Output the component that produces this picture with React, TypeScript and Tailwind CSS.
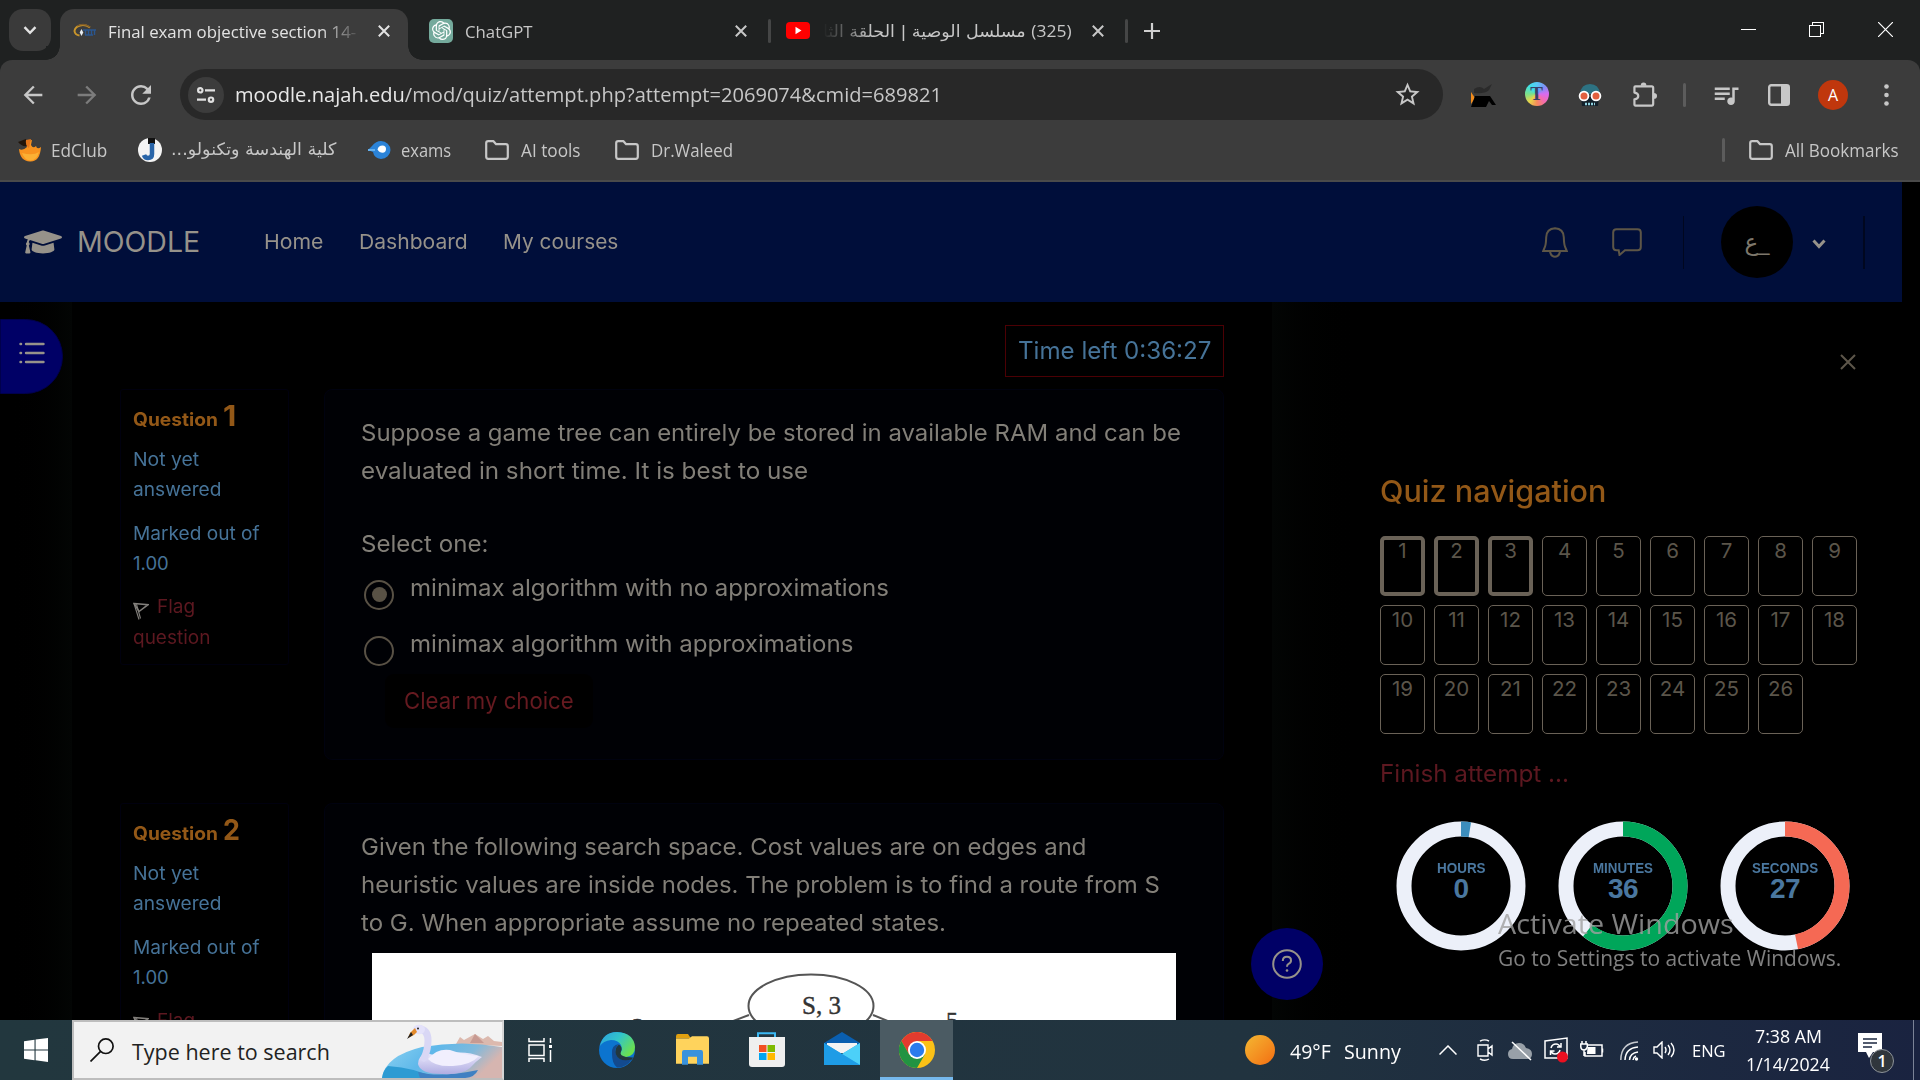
import { useLayoutEffect, useRef, useState, type ReactNode } from "react";
import { FaGraduationCap } from "react-icons/fa";
import { SiOpenai } from "react-icons/si";
import { MdQueueMusic, MdStarBorder, MdRefresh, MdArrowBack, MdArrowForward } from "react-icons/md";

/* Text run that is condensed or widened to an exact width. */
function Fit({ w, className = "", children }: { w: number; className?: string; children: ReactNode }) {
  const ref = useRef<HTMLSpanElement>(null);
  const [scale, setScale] = useState(1);
  useLayoutEffect(() => {
    if (ref.current) setScale(w / ref.current.offsetWidth);
  }, [w]);
  return (
    <span className={"block shrink-0 whitespace-nowrap " + className} style={{ width: w }}>
      <span ref={ref} className="inline-block origin-left" style={{ transform: `scaleX(${scale})` }}>
        {children}
      </span>
    </span>
  );
}

const Cross = ({ className = "" }: { className?: string }) => (
  <svg viewBox="0 0 12 12" className={"h-3 w-3 shrink-0 " + className} stroke="currentColor" strokeWidth="2" fill="none">
    <path d="M.8.8l10.4 10.4M11.2.8L.8 11.2" />
  </svg>
);

const Folder = () => (
  <svg viewBox="0 0 24 20" className="h-5 w-6 shrink-0 text-[#c7c7c7]" fill="none" stroke="currentColor" strokeWidth="2.2">
    <path d="M1.2 3.2q0-2 2-2h5.3l2.6 3h9.7q2 0 2 2v10.6q0 2-2 2H3.2q-2 0-2-2z" strokeLinejoin="round" />
  </svg>
);

function TabStrip() {
  return (
    <div className="flex h-[60px] items-start bg-[#1f2121] pt-[9px] text-[17px] text-[#c7c7c7]">
      <div className="ml-[9px] flex h-[42px] w-[42px] items-center justify-center rounded-[14px] bg-[#3a3a3a]">
        <svg viewBox="0 0 14 9" className="h-[9px] w-[14px]" fill="none" stroke="#e3e3e3" strokeWidth="2.4">
          <path d="M1.5 1.2L7 6.8l5.500-5.600" />
        </svg>
      </div>
      <div className="relative ml-[9px] flex h-[51px] w-[348px] items-center rounded-t-[14px] bg-[#3c3c3c] pb-[8px] text-[#e3e3e3]">
        <span className="absolute -left-[14px] bottom-0 h-[14px] w-[14px] bg-[radial-gradient(circle_at_0_0,#1f2121_13.500px,#3c3c3c_14px)]" />
        <span className="absolute -right-[14px] bottom-0 h-[14px] w-[14px] bg-[radial-gradient(circle_at_100%_0,#1f2121_13.500px,#3c3c3c_14px)]" />
        <svg viewBox="0 0 24 16" className="ml-[13px] h-4 w-6 shrink-0" fill="none">
          <path d="M17 4.500Q12 1 7 2.500 2 4 1.500 8q.5 4 5 4.500" stroke="#c9952b" strokeWidth="2" />
          <path d="M4 3Q11-.5 17 4" stroke="#7c5a2a" strokeWidth="1.300" />
          <path d="M12.500 7v5M15.500 7v5M18.500 7v5M21.500 7v5M10 7h13M12 12h8" stroke="#2a568f" strokeWidth="1.400" />
          <path d="M8.500 6l1.800 3.500L8.500 13l-1.800-3.500z" fill="#e8edf2" />
        </svg>
        <div className="mt-[2px] ml-[11px] w-[254px] overflow-hidden [mask-image:linear-gradient(to_right,#000_212px,transparent_254px)]">
          <Fit w={248}>Final exam objective section 14-</Fit>
        </div>
        <Cross className="ml-[16px]" />
      </div>
      <div className="flex h-[43px] items-center">
        <div className="ml-[21px] flex h-6 w-6 items-center justify-center rounded-[5px] bg-[#74aa9c]">
          <SiOpenai className="h-[19px] w-[19px] text-white" />
        </div>
        <Fit w={68} className="mt-[2px] ml-[12px]">ChatGPT</Fit>
        <Cross className="ml-[202px]" />
        <span className="ml-[21px] h-6 w-[3px] rounded bg-[#454646]" />
        <svg viewBox="0 0 24 17" className="ml-[15px] h-[17px] w-6 shrink-0">
          <rect width="24" height="17" rx="4" fill="#f00" />
          <path d="M9.500 4.800v7.400l6-3.700z" fill="#fff" />
        </svg>
        <div className="mt-[3px] ml-[13px] w-[249px] overflow-hidden font-[DejaVu_Sans] text-[16.500px] [mask-image:linear-gradient(to_left,#000_200px,transparent_249px)]">
          <Fit w={249}>
            <span dir="rtl"><span className="font-['Open_Sans']">(325)</span> مسلسل الوصية | الحلقة الثا</span>
          </Fit>
        </div>
        <Cross className="ml-[20px]" />
        <span className="ml-[21px] h-6 w-[3px] rounded bg-[#454646]" />
        <svg viewBox="0 0 16 16" className="ml-[16px] h-4 w-4" stroke="#d0d0d0" strokeWidth="2.200">
          <path d="M8 0v16M0 8h16" />
        </svg>
      </div>
      <div className="ml-auto flex h-[41px] items-center">
        <span className="mr-[53px] h-px w-[15px] bg-white" />
        <svg viewBox="0 0 15 15" className="mr-[54px] h-[15px] w-[15px]" fill="none" stroke="#fff" shapeRendering="crispEdges">
          <path d="M.5 3.500h11v11H.5zM3.500 3V.5h11v11H12" />
        </svg>
        <svg viewBox="0 0 15 15" className="mr-[27px] h-[15px] w-[15px]" fill="none" stroke="#fff" strokeWidth="1.200">
          <path d="M0 0l15 15M15 0L0 15" />
        </svg>
      </div>
    </div>
  );
}

function Toolbar() {
  return (
    <div className="bg-[#1f2121]">
      <div className="flex h-[68px] items-center rounded-t-[12px] bg-[#3c3c3c] pt-px text-[#c7c7c7]">
        <MdArrowBack className="ml-[19px] h-[28px] w-[28px] text-[#c7c7c7]" />
        <MdArrowForward className="ml-[26px] h-[28px] w-[28px] text-[#7c7c7c]" />
        <MdRefresh className="ml-[25px] h-[30px] w-[30px]" />
        <div className="ml-[24px] flex h-[51px] w-[1263px] items-center rounded-full bg-[#282828] text-[20px]">
          <div className="ml-2 flex h-9 w-9 items-center justify-center rounded-full bg-[#3c3c3c]">
            <svg viewBox="0 0 18 16" className="h-4 w-[18px]" fill="none" stroke="#e0e0e0" strokeWidth="2.200">
              <circle cx="3.300" cy="3.300" r="2.200" />
              <path d="M8 3.300h10M0 12.700h9" />
              <circle cx="14" cy="12.700" r="2.200" />
            </svg>
          </div>
          <Fit w={707} className="ml-[11px]">
            <span className="text-[#e8e8e8]">moodle.najah.edu</span>/mod/quiz/attempt.php?attempt=2069074&amp;cmid=689821
          </Fit>
          <MdStarBorder className="ml-[451px] h-[29px] w-[29px]" />
        </div>
        <div className="ml-[12px] flex w-[108px] justify-around">
          <svg viewBox="0 0 26 26" className="h-[26px] w-[26px]">
            <path d="M4 7q6-4 10 0l8-5-3 6q-4 4-15 3z" fill="#2b2b2b" />
            <path d="M1 10l4 6-4 6z" fill="#f28c1c" />
            <path d="M5 14h15l6 9h-4l-3-4-3 6H1z" fill="#000" />
          </svg>
          <div className="flex h-6 w-6 items-center justify-center rounded-full bg-[conic-gradient(#59c8f5,#7d8ff5,#d86bf0,#f56bb0,#f58a5b,#e8d54a,#7be08a,#3fe0e8,#59c8f5)] font-['Liberation_Serif'] text-[19px] leading-none font-bold text-[#3a3f66]">
            T
          </div>
        </div>
        <svg viewBox="0 0 24 24" className="ml-[15px] h-6 w-6">
          <path d="M2 11Q3 1 12 1t10 10z" fill="#2d7282" />
          <path d="M3 14h18l-1 9H4z" fill="#13202a" />
          <path d="M7 21h10" stroke="#8fd0dd" strokeWidth="2.500" strokeDasharray="2 1" />
          <circle cx="6" cy="13" r="4.400" fill="#e2603f" stroke="#fff" strokeWidth="1.800" />
          <circle cx="18" cy="13" r="4.400" fill="#e2603f" stroke="#fff" strokeWidth="1.800" />
        </svg>
        <svg viewBox="0 0 26 26" className="ml-[30px] h-[26px] w-[26px] pb-[1px]" fill="none" stroke="currentColor" strokeWidth="2.300">
          <path d="M2 5.500q0-1 1-1h17q1.500 0 1.500 1.500v17q0 1.500-1.500 1.500H3q-1 0-1-1V18q4-.5 4-3.500t-4-3.500z" strokeLinejoin="round" />
          <path d="M8.500 4a3 3.500 0 0 1 6 0zM22 11.500a3.500 3 0 0 1 0 6z" fill="currentColor" stroke="none" />
        </svg>
        <span className="ml-[25px] h-6 w-[3px] rounded bg-[#5c5c5c]" />
        <MdQueueMusic className="ml-[25px] h-[30px] w-[30px]" />
        <svg viewBox="0 0 22 22" className="ml-[27px] h-[22px] w-[22px]">
          <rect x="1.200" y="1.200" width="19.600" height="19.600" rx="2" fill="none" stroke="currentColor" strokeWidth="2.400" />
          <path d="M13 1h8v20h-8z" fill="currentColor" />
        </svg>
        <div className="ml-[28px] flex h-[30px] w-[30px] items-center justify-center rounded-full bg-[#c0370d] text-[16px] text-white">A</div>
        <svg viewBox="0 0 5 22" className="ml-[36px] h-[22px] w-[5px]" fill="currentColor">
          <circle cx="2.500" cy="2.500" r="2.300" />
          <circle cx="2.500" cy="11" r="2.300" />
          <circle cx="2.500" cy="19.500" r="2.300" />
        </svg>
      </div>
      <div className="flex h-[54px] items-center border-b-2 border-[#4a4a4a] bg-[#3c3c3c] pb-[8px] text-[17.5px] text-[#c7c7c7]">
        <svg viewBox="0 0 24 24" className="ml-[18px] h-6 w-6">
          <path d="M1 11q1 12 11 12.500T23 9q-4 3-5-1-3 3-5-1l1-5-5 1Q7 5 9 9q-4 4-8 2z" fill="#f8931f" />
          <path d="M4 15q3 8 9 7.500T21 14q-6 4-17 1z" fill="#fbb034" />
          <path d="M0 4l8-3 1 7q-5 1-9-4z" fill="#20140a" />
          <path d="M8 2l5-1-2 9q-4-3-3-8z" fill="#e2741a" />
        </svg>
        <Fit w={56} className="ml-[9px]">EdClub</Fit>
        <svg viewBox="0 0 24 24" className="ml-[31px] h-6 w-6">
          <circle cx="12" cy="12" r="12" fill="#f4f4f4" />
          <path d="M10 0h7v6h-7z" fill="#111" />
          <path d="M14 5v11q0 4-4 4-3 0-4-3" fill="none" stroke="#2864a8" strokeWidth="4.500" />
        </svg>
        <Fit w={165} className="ml-[9px] font-[DejaVu_Sans] text-[17px]">
          <span dir="rtl">كلية الهندسة وتكنولو...</span>
        </Fit>
        <svg viewBox="0 0 24 20" className="ml-[32px] h-5 w-6">
          <path d="M4 6Q8 1 13 1a9.500 9 0 0 1 0 18Q6 18 5 12L0 10z" fill="#2b83d8" />
          <path d="M0 10h7" stroke="#63b0ee" strokeWidth="2" />
          <path d="M9.500 9.500q1-4 5-4 3.500 0 3.500 3.500t-3.500 3.800q-3 0-5-3.300z" fill="#fff" />
        </svg>
        <Fit w={50} className="mr-[34px] ml-[9px]">exams</Fit>
        <Folder />
        <Fit w={60} className="mr-[34px] ml-[12px]">AI tools</Fit>
        <Folder />
        <Fit w={82} className="ml-[12px]">Dr.Waleed</Fit>
        <span className="mr-[24px] ml-auto h-6 w-[3px] rounded bg-[#5c5c5c]" />
        <Folder />
        <Fit w={114} className="mr-[21px] ml-[12px]">All Bookmarks</Fit>
      </div>
    </div>
  );
}

function SiteHeader() {
  return (
    <header className="flex h-[120px] w-[1902px] items-center bg-[#000e3a] text-[20.5px] text-[#96928a]">
      <FaGraduationCap className="ml-[24px] h-[38px] w-[38px] shrink-0" />
      <Fit w={123} className="ml-[15px] text-[28.5px]">MOODLE</Fit>
      <Fit w={59} className="ml-[64px]">Home</Fit>
      <Fit w={109} className="ml-[36px]">Dashboard</Fit>
      <Fit w={115} className="ml-[35px]">My courses</Fit>
      <svg viewBox="0 0 26 31" className="ml-auto h-[31px] w-[26px] text-[#5d5647]" fill="none" stroke="currentColor" strokeWidth="2">
        <path d="M13 1.200q8.500.5 8.800 9 .2 7 1.200 9.500l1.800 4.300H1.200L3 19.700q1-2.500 1.200-9.500.3-8.500 8.800-9z" />
        <path d="M8 24.500q1 5.300 5 5.300t5-5.300" />
      </svg>
      <svg viewBox="0 0 30 28" className="ml-[44px] h-[28px] w-[30px] text-[#5d5647]" fill="none" stroke="currentColor" strokeWidth="2">
        <path d="M4.500 1.200h21q3.300 0 3.300 3.300v14.500q0 3.300-3.300 3.300H13L7.500 27l-.8-4.700H4.500q-3.300 0-3.300-3.300V4.500q0-3.300 3.300-3.300z" />
      </svg>
      <span className="ml-[41px] h-[53px] w-px bg-[#00071f]" />
      <div className="ml-[37px] flex h-[72px] w-[72px] items-center justify-center rounded-full bg-black font-[DejaVu_Sans] text-[23px] text-[#7d776b]" dir="rtl">_ع</div>
      <svg viewBox="0 0 14 10" className="mt-[3px] ml-[19px] h-[10px] w-[14px]" fill="none" stroke="#96928a" strokeWidth="3">
        <path d="M1.500 1.500L7 7.500l5.500-6" />
      </svg>
      <span className="mr-[37px] ml-[37px] h-[53px] w-[2px] bg-[#00071f]" />
    </header>
  );
}

function FlagIcon() {
  return (
    <svg viewBox="0 0 16 18" className="mt-[11px] mr-[8px] h-[18px] w-[16px] shrink-0" fill="none" stroke="#827f7b" strokeWidth="1.500">
      <path d="M1 1.500l5 16M3.500 2.200l4 14.300" strokeWidth="1.100" />
      <path d="M1 1.500l14 1.200L6 9.500z" />
    </svg>
  );
}

function QuestionInfo({ n, w }: { n: number; w: number }) {
  return (
    <div className="h-[276px] w-[169px] shrink-0 rounded-[3px] border border-[#00000e] pt-[11px] pl-[12px] text-[18.500px] leading-[30px] text-[#467398]">
      <div className="flex h-[30px] items-baseline font-bold text-[#935817]">
        <Fit w={85}>Question</Fit>
        <Fit w={w} className="ml-[5px] text-[28.500px]">{n}</Fit>
      </div>
      <div className="mt-[13px]"><Fit w={66}>Not yet</Fit></div>
      <div><Fit w={88}>answered</Fit></div>
      <div className="mt-[14px]"><Fit w={127}>Marked out of</Fit></div>
      <div><Fit w={36}>1.00</Fit></div>
      <div className="mt-[13px] flex text-[#5d1820]">
        <FlagIcon />
        <Fit w={38}>Flag</Fit>
      </div>
      <div className="mt-px text-[#5d1820]"><Fit w={77}>question</Fit></div>
    </div>
  );
}

function Radio({ on }: { on?: boolean }) {
  return (
    <span className="mt-[11px] ml-[3px] flex h-[30px] w-[30px] items-center justify-center rounded-full border-2 border-[#585145]">
      {on && <span className="h-[15px] w-[15px] rounded-full bg-[#585145]" />}
    </span>
  );
}

const bodyBox = "w-[900px] shrink-0 rounded-[8px] border border-[#00020f] bg-[#000105] pt-[24px] pl-[36px] text-[23.5px] text-[#827f78]";

function Main() {
  return (
    <main className="w-[1200px] shrink-0 bg-black pl-[48px]">
      <div className="mt-[23px] ml-[885px] flex h-[52px] w-[219px] items-center border border-[#4c0004] pl-[12px] text-[24px] leading-[36px] text-[#467398]">
        <Fit w={193}>Time left 0:36:27</Fit>
      </div>
      <section className="mt-[12px] flex gap-[35px]">
        <QuestionInfo n={1} w={13} />
        <div className={"h-[371px] leading-[37.5px] " + bodyBox}>
          <Fit w={820}>Suppose a game tree can entirely be stored in available RAM and can be</Fit>
          <Fit w={447}>evaluated in short time. It is best to use</Fit>
          <Fit w={127} className="mt-[36px]">Select one:</Fit>
          <div className="mt-[6px] flex h-[56px]">
            <Radio on />
            <Fit w={479} className="ml-[16px]">minimax algorithm with no approximations</Fit>
          </div>
          <div className="flex h-[49px]">
            <Radio />
            <Fit w={443} className="ml-[16px]">minimax algorithm with approximations</Fit>
          </div>
          <div className="ml-[24px] flex h-[54px] w-[208px] items-center rounded-[9px] bg-black pl-[19px] text-[#661a20]">
            <Fit w={170}>Clear my choice</Fit>
          </div>
        </div>
      </section>
      <section className="mt-[43px] flex gap-[35px]">
        <QuestionInfo n={2} w={17} />
        <div className={"h-[400px] leading-[38px] " + bodyBox}>
          <Fit w={725}>Given the following search space. Cost values are on edges and</Fit>
          <Fit w={799}>heuristic values are inside nodes. The problem is to find a route from S</Fit>
          <Fit w={585}>to G. When appropriate assume no repeated states.</Fit>
          <svg viewBox="0 0 804 120" className="mt-[11px] ml-[11px] h-[120px] w-[804px] bg-white font-['Liberation_Serif']" fill="none" stroke="#555" strokeWidth="2">
            <ellipse cx="439" cy="53" rx="62.500" ry="31.500" />
            <path d="M377 62L340 76M501 62l37 15" />
            <g fill="#333" stroke="#333" strokeWidth=".4" fontSize="25">
              <text x="430" y="61">S, 3</text>
              <text x="574" y="75" fontSize="24">5</text>
              <text x="260" y="81" fontSize="24">2</text>
            </g>
          </svg>
        </div>
      </section>
    </main>
  );
}

const rings = [
  { x: "ml-[124px]", label: "HOURS", w: 49, value: "0", color: "#3c8dbc", deg: 9 },
  { x: "ml-[32px]", label: "MINUTES", w: 60, value: "36", color: "#00a65a", deg: 218 },
  { x: "ml-[32px]", label: "SECONDS", w: 66, value: "27", color: "#f56954", deg: 168 },
];

function QuizNavigation() {
  const c = 2 * Math.PI * 57;
  return (
    <aside className="w-[648px] shrink-0 bg-linear-to-r from-[#030504] via-black via-[15%] to-black">
      <svg viewBox="0 0 16 16" className="mt-[52px] ml-[568px] h-4 w-4" stroke="#5d564a" strokeWidth="2">
        <path d="M1 1l14 14M15 1L1 15" />
      </svg>
      <h2 className="mt-[101px] ml-[108px] h-[40px] text-[30px] leading-[40px] font-medium text-[#935817]">
        <Fit w={226}>Quiz navigation</Fit>
      </h2>
      <div className="mt-[25px] ml-[108px] grid w-[477px] grid-cols-9 gap-x-[9px] gap-y-[9px] text-center text-[20.500px] text-[#5b554a]">
        {Array.from({ length: 26 }, (_, i) => (
          <div
            key={i}
            className={
              "h-[60px] w-[45px] rounded-[5px] border-[#6a6257] " +
              (i < 3 ? "border-4 leading-[21px]" : "border leading-[27px]")
            }
          >
            {i + 1}
          </div>
        ))}
      </div>
      <Fit w={189} className="mt-[22px] ml-[108px] text-[24px] leading-[36px] text-[#5d1820]">Finish attempt ...</Fit>
      <div className="mt-[29px] flex">
        {rings.map((r) => (
          <div key={r.label} className={"relative h-[130px] w-[130px] " + r.x}>
            <svg viewBox="0 0 130 130" className="h-full w-full -rotate-90" fill="none" strokeWidth="15">
              <circle cx="65" cy="65" r="57" stroke="#ecf0f9" />
              <circle cx="65" cy="65" r="57" stroke={r.color} strokeDasharray={`${(c * r.deg) / 360} ${c}`} />
            </svg>
            <div className="absolute inset-0 flex flex-col items-center pt-[39px] font-['Liberation_Sans'] font-bold text-[#4a779f]">
              <Fit w={r.w} className="h-[16px] text-[14px] leading-[16px]">{r.label}</Fit>
              <span className="-mt-px text-[28px] leading-[28px] tracking-[-0.5px]">{r.value}</span>
            </div>
          </div>
        ))}
      </div>
    </aside>
  );
}

function Swan() {
  return (
    <svg viewBox="0 0 120 56" className="ml-auto h-[56px] w-[120px]">
      <defs>
        <linearGradient id="lake" x1="0" y1="0" x2="1" y2=".3">
          <stop offset="0" stopColor="#8fd4f2" />
          <stop offset=".45" stopColor="#5fb8ea" />
          <stop offset=".75" stopColor="#7fb9dc" />
          <stop offset="1" stopColor="#d6b5b0" />
        </linearGradient>
        <linearGradient id="swan" x1="0" y1="0" x2="0" y2="1">
          <stop offset="0" stopColor="#eceafc" />
          <stop offset="1" stopColor="#b0ade2" />
        </linearGradient>
      </defs>
      <path d="M74 22l4-7 4 3 11-6 8 5 5-3 6 5 8 1v4z" fill="#dcb9ae" />
      <path d="M93 12l-5 9h14z" fill="#c79a92" />
      <path d="M0 56Q3 34 40 25 80 18 120 25v31z" fill="url(#lake)" />
      <path d="M0 56q1-8 6-12 28 2 46 12z" fill="#2d9bd3" />
      <path d="M36 50q22 6 60-2-4 9-18 8H38z" fill="#3f80c2" />
      <path d="M36 42Q36 34 44 31q12 4 22 1 16-4 34 3-7 5-12 11-8 7-28 6-22 0-24-10z" fill="url(#swan)" />
      <path d="M37 6.500Q46 8 46 18T42 36" fill="none" stroke="#d9d7f5" strokeWidth="7" strokeLinecap="round" />
      <ellipse cx="37" cy="7.500" rx="6" ry="4.800" fill="#e4e2fa" />
      <path d="M46 37q9-11 22-9 14 5 29 6-8 9-26 10-18 1-25-7z" fill="#f1effd" />
      <path d="M33 6l-5 5-2 5 6-3 3-3z" fill="#e38b2b" />
      <path d="M29 10l-4 7 6-4z" fill="#222" />
      <circle cx="36" cy="6.500" r="1" fill="#222" />
    </svg>
  );
}

function Taskbar() {
  return (
    <div className="flex h-[60px] items-center bg-linear-to-r from-[#22373e] via-[#21333f] via-[65%] to-[#1a2340] text-white">
      <svg viewBox="0 0 24 24" className="ml-6 h-6 w-6" fill="#fff">
        <path d="M0 3.300l10.500-1.500v9.700H0zM11.600 1.600L24 0v11.500H11.600zM0 12.600h10.500v9.700L0 20.800zM11.600 12.600H24V24l-12.400-1.700z" />
      </svg>
      <div className="ml-6 flex h-[60px] w-[432px] items-center border-2 border-[#bdbdbd] border-r-[#d5d5d5] bg-[#f2f2f2] text-[21.500px] text-[#222]">
        <svg viewBox="0 0 24 24" className="ml-[16px] h-6 w-6" fill="none" stroke="#111" strokeWidth="1.700">
          <circle cx="15.800" cy="8.200" r="7.300" />
          <path d="M10.600 13.400L.5 23.500" />
        </svg>
        <Fit w={198} className="mt-[5px] ml-[18px]">Type here to search</Fit>
        <Swan />
      </div>
      <svg viewBox="0 0 24 24" className="ml-6 h-6 w-6" fill="none" stroke="#fff" strokeWidth="1.500">
        <path d="M1 0v3.500h15V0M1 24v-3.500h15V24M1 7h15v10.500H1zM22.500 0v5M22.500 12v12" />
        <path d="M21 7h3v3h-3z" fill="#fff" stroke="none" />
      </svg>
      <svg viewBox="0 0 36 36" className="ml-[47px] h-9 w-9">
        <defs>
          <linearGradient id="edgeTop" x1="0" y1="0" x2="1" y2=".6">
            <stop offset="0" stopColor="#2b9fe0" />
            <stop offset=".5" stopColor="#32c5c9" />
            <stop offset="1" stopColor="#6be04e" />
          </linearGradient>
        </defs>
        <circle cx="18" cy="18" r="18" fill="#0c74cf" />
        <path d="M1 14Q4 0 18 0q17 1 18 15 0 9-9 10-7 0-6-4 3-3 1-8Q19 8 12 8 4 9 1 14z" fill="url(#edgeTop)" />
        <path d="M13 22q-1-9 7-10-5 4-3 10 3 8 16 5-6 9-15 8.500-5-4-5-13.500z" fill="#134a8e" />
        <path d="M20 12.500q4 3 2 7-2 4 5 5.500l7 .5-1 2q-13 3-16-5-2-6 3-10z" fill="#22373e" />
      </svg>
      <svg viewBox="0 0 33 28" className="ml-[41px] h-[32px] w-[33px]" preserveAspectRatio="none">
        <path d="M0 2q0-2 2-2h10l3 4H0z" fill="#e0a010" />
        <path d="M0 4h13l3-2h15q2 0 2 2v22H0z" fill="#ffd35c" />
        <path d="M6 27V16q0-2 2-2h17q2 0 2 2v11h-6v-7h-9v7z" fill="#3a92dc" />
      </svg>
      <svg viewBox="0 0 36 36" className="ml-[40px] h-9 w-9">
        <path d="M9 7V1.200h17V7" fill="none" stroke="#3bb8f3" strokeWidth="2" />
        <path d="M0 5h36v27q0 3-3 3H3q-3 0-3-3z" fill="#efefef" />
        <path d="M10 13h7.500v7H10z" fill="#f25022" />
        <path d="M18.500 13H26v7h-7.500z" fill="#7fba00" />
        <path d="M10 21h7.500v7H10z" fill="#00a4ef" />
        <path d="M18.500 21H26v7h-7.500z" fill="#ffb900" />
      </svg>
      <svg viewBox="0 0 36 34" className="mb-[2px] ml-[39px] h-[34px] w-9">
        <path d="M0 11L18 0l18 11v5H0z" fill="#0a5fb0" />
        <path d="M3 11h30v10H3z" fill="#f3f3f3" />
        <path d="M0 11l18 11L36 11v22H0z" fill="#2aa9ea" />
        <path d="M36 11L18 22l18 11z" fill="#4cd0f8" />
        <path d="M0 33V11l36 22z" fill="#1e9ce6" />
      </svg>
      <div className="ml-[20px] flex h-[60px] w-[73px] items-center justify-center border-b-[3px] border-[#76b9ed] bg-[#4b5b63] pt-[3px]">
        <svg viewBox="0 0 36 36" className="h-9 w-9">
          <circle cx="18" cy="18" r="18" fill="#fbc116" />
          <path d="M2.400 9A18 18 0 0 1 33.600 9H18l-7.800 13.500z" fill="#e33b2e" />
          <path d="M2.400 9A18 18 0 0 0 18 36l7.800-13.500H10.200z" fill="#229342" />
          <circle cx="18" cy="18" r="9" fill="#fff" />
          <circle cx="18" cy="18" r="7.200" fill="#2a7bec" />
        </svg>
      </div>
      <span className="ml-[292px] h-[30px] w-[30px] rounded-full bg-linear-to-br from-[#f3b732] to-[#f26c10]" />
      <Fit w={41} className="mt-[3px] ml-[15px] text-[20px]">49°F</Fit>
      <Fit w={57} className="mt-[3px] ml-[13px] text-[20px]">Sunny</Fit>
      <svg viewBox="0 0 18 10" className="ml-[38px] h-[10px] w-[18px]" fill="none" stroke="#fff" strokeWidth="1.500">
        <path d="M.5 9.500L9 1l8.500 8.500" />
      </svg>
      <svg viewBox="0 0 16 22" className="ml-[20px] h-[22px] w-4" fill="none" stroke="#fff" strokeWidth="1.400">
        <path d="M1 6h10v11H1zM11 10l4-3v9l-4-3M3 2.200Q8-.5 12 2.200M3 20q5 2.500 9 0" />
      </svg>
      <svg viewBox="0 0 24 20" className="mt-[2px] ml-[15px] h-5 w-6">
        <path d="M5 18q-5 0-5-5 0-4 4-5 1-6 7-6 5 0 7 5 6 1 6 6t-5 5z" fill="#98a0a8" />
        <path d="M4 1l19 18" stroke="#fff" strokeWidth="1.500" />
      </svg>
      <svg viewBox="0 0 24 26" className="ml-[12px] h-[26px] w-6" fill="none" stroke="#fff" strokeWidth="1.500">
        <path d="M1 4l22-3v20H1z" />
        <path d="M7 11q1-4 5-4 3 0 4 3M17 6v4h-4M16 13q-1 4-5 4-3 0-4-3M6.500 18v-4h4" />
        <circle cx="18.500" cy="20" r="5.500" fill="#ea1020" stroke="none" />
      </svg>
      <svg viewBox="0 0 24 18" className="ml-[12px] h-[18px] w-6" fill="none" stroke="#fff" strokeWidth="1.500">
        <path d="M7 4h15v11H5v-4M22.500 7.500v4M2 0v3M6 0v3M.8 3h6.500v3q-1 3-3.200 3Q1 9 .8 6zM4 9v6" />
        <path d="M7.500 6h8v7H7z" fill="#fff" stroke="none" />
      </svg>
      <svg viewBox="0 0 19 20" className="mt-[2px] ml-[16px] h-5 w-[19px]" fill="none" stroke="#fff" strokeWidth="1.500">
        <path d="M.8 19Q1 2 18 1" opacity=".75" />
        <path d="M5 19Q5.500 7 18 6M9.500 19Q10 12 18 11M13 19q.5-3 3-4" />
        <circle cx="16.500" cy="18" r="1.700" fill="#fff" stroke="none" />
      </svg>
      <svg viewBox="0 0 23 18" className="ml-[14px] h-[18px] w-[23px]" fill="none" stroke="#fff" strokeWidth="1.400">
        <path d="M1 6h3l5-5v16l-5-5H1zM12 6q2 3 0 6M15 4q4 5 0 10M18 2q6 7 0 14" />
      </svg>
      <Fit w={34} className="mt-[2px] ml-[16px] text-[17px]">ENG</Fit>
      <div className="ml-[20px] flex flex-col items-center text-[17.500px] leading-[28px]">
        <Fit w={67} className="h-[28px]">7:38 AM</Fit>
        <Fit w={84} className="h-[28px]">1/14/2024</Fit>
      </div>
      <div className="relative ml-[28px] h-[36px] w-[37px]">
        <svg viewBox="0 0 24 25" className="mt-[1px] h-[25px] w-6">
          <path d="M0 0h24v19h-9l-4 6-3-6H0z" fill="#fff" />
          <path d="M5 6h14M5 10h14M5 14h9" stroke="#1b2740" strokeWidth="1.400" />
        </svg>
        <span className="absolute right-[1px] -bottom-[5px] flex h-[24px] w-[24px] items-center justify-center rounded-full border border-[#8d9399] bg-[#30363c] text-[16px] leading-none font-semibold">1</span>
      </div>
      <span className="ml-[18px] h-[60px] w-px bg-[#7b8396]" />
    </div>
  );
}

export default function App() {
  return (
    <div className="relative flex h-[1080px] w-[1920px] flex-col overflow-hidden bg-black font-['Open_Sans',sans-serif]">
      <TabStrip />
      <Toolbar />
      <div className="h-[838px] overflow-hidden font-[Inter,sans-serif]">
        <SiteHeader />
        <div className="flex h-[718px] overflow-hidden">
          <div className="w-[72px] shrink-0 bg-linear-to-r from-black to-[#030504]">
            <div className="mt-[17px] flex h-[75px] w-[63px] rounded-r-full border border-[#00004c] bg-[#000066]">
              <svg viewBox="0 0 26 22" className="mt-[22px] ml-[18px] h-[22px] w-[26px]" stroke="#96928a" strokeWidth="2.400" strokeLinecap="round">
                <path d="M1.500 2h.6M7 2h17.500M1.500 11h.6M7 11h17.500M1.500 20h.6M7 20h17.500" />
              </svg>
            </div>
          </div>
          <Main />
          <QuizNavigation />
        </div>
      </div>
      <Taskbar />
      <button className="absolute top-[928px] left-[1251px] flex h-[72px] w-[72px] items-center justify-center rounded-full bg-[#000066]">
        <svg viewBox="0 0 30 30" className="h-[30px] w-[30px]" fill="none" stroke="#96928a" strokeWidth="2">
          <circle cx="15" cy="15" r="13.800" />
          <path d="M10.800 12q0-4.200 4.200-4.200 4 0 4 3.600 0 2.300-2.500 3.400-1.500.8-1.500 3" strokeWidth="2" />
          <circle cx="15" cy="21.500" r="1.300" fill="#96928a" stroke="none" />
        </svg>
      </button>
      <div className="absolute top-[905px] left-[1498px] text-[#a0a0a0]/80">
        <Fit w={236} className="h-[37px] text-[28px] leading-[36px]">Activate Windows</Fit>
        <Fit w={343} className="text-[21.500px] leading-[32px]">Go to Settings to activate Windows.</Fit>
      </div>
    </div>
  );
}
